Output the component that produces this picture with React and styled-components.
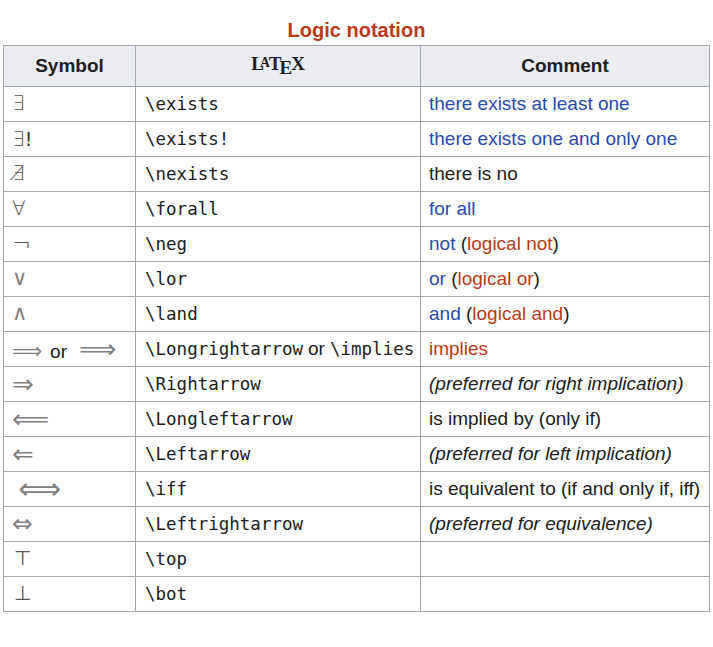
import React from "react";
import styled, { createGlobalStyle } from "styled-components";

const Global = createGlobalStyle`
  html, body { margin: 0; padding: 0; background: #fff; }
  body { font-family: "Liberation Sans", Arial, sans-serif; color: #202122; }
`;

const Page = styled.div`
  padding: 0 0 0 3px;
`;

const Table = styled.table`
  border-collapse: collapse;
  width: 707px;
  table-layout: fixed;
  font-size: 19px;
  color: #202122;
`;

const Caption = styled.caption`
  font-weight: bold;
  font-size: 20px;
  color: #ba3a1a;
  padding: 19px 0 4px;
  line-height: 22px;
`;

const Th = styled.th`
  background: #eaecf0;
  border: 1px solid #a2a9b1;
  height: 40px;
  padding: 0 8px;
  font-weight: bold;
  font-size: 19px;
  text-align: center;
  vertical-align: middle;
`;

const Row = styled.tr`
  height: 35px;
`;

const Td = styled.td`
  border: 1px solid #a2a9b1;
  padding: 0 8px;
  height: 34px;
  line-height: 22px;
  vertical-align: middle;
  white-space: nowrap;
  font-style: ${(p) => (p.$italic ? "italic" : "normal")};
`;

const SymCell = styled(Td)`
  padding-left: 8px;
`;

const Sym = styled.span`
  font-family: "DejaVu Sans", sans-serif;
  font-weight: ${(p) => (p.$regular ? 400 : 200)};
  font-size: ${(p) => p.$size || 20}px;
  line-height: 1;
  color: ${(p) => (p.$regular ? "#808080" : "#555")};
  margin-left: ${(p) => p.$indent || 0}px;
`;

const Bang = styled.span`
  font-family: "DejaVu Sans", sans-serif;
  font-size: 19px;
  color: #333;
`;

const Or = styled.span`
  font-family: "Liberation Sans", Arial, sans-serif;
  font-size: 19px;
  color: #202122;
  margin: 0 ${(p) => p.$pad || 4}px;
`;

const Code = styled.code`
  font-family: "DejaVu Sans Mono", monospace;
  font-size: 17.5px;
  color: #202122;
`;

const CodeCell = styled(Td)`
  padding-left: 9px;
`;

const Link = styled.span`
  color: ${(p) => (p.$red ? "#ba3a1a" : "#2a4aad")};
`;

const LatexLogo = styled.span`
  font-family: "Liberation Serif", "Times New Roman", serif;
  font-weight: bold;
  font-size: 19px;
`;

const LogoA = styled.span`
  font-size: 0.72em;
  vertical-align: 0.22em;
  margin-left: -0.28em;
  margin-right: -0.08em;
`;

const LogoE = styled.span`
  vertical-align: -0.25em;
  margin-left: -0.1em;
  margin-right: -0.06em;
`;

const rows = [
  { sym: <Sym>∃</Sym>, code: "\\exists", comment: <Link>there exists at least one</Link> },
  {
    sym: (
      <>
        <Sym>∃</Sym>
        <Bang>!</Bang>
      </>
    ),
    code: "\\exists!",
    comment: <Link>there exists one and only one</Link>,
  },
  { sym: <Sym>∄</Sym>, code: "\\nexists", comment: "there is no" },
  { sym: <Sym>∀</Sym>, code: "\\forall", comment: <Link>for all</Link> },
  {
    sym: <Sym $size={23}>¬</Sym>,
    code: "\\neg",
    comment: (
      <>
        <Link>not</Link> (<Link $red>logical not</Link>)
      </>
    ),
  },
  {
    sym: <Sym $regular $size={21}>∨</Sym>,
    code: "\\lor",
    comment: (
      <>
        <Link>or</Link> (<Link $red>logical or</Link>)
      </>
    ),
  },
  {
    sym: <Sym $regular $size={21}>∧</Sym>,
    code: "\\land",
    comment: (
      <>
        <Link>and</Link> (<Link $red>logical and</Link>)
      </>
    ),
  },
  {
    sym: (
      <>
        <Sym $regular $size={21}>⟹</Sym>
        <Or $pad={8}>or</Or>
        <Sym $regular $size={26} $indent={4}>⟹</Sym>
      </>
    ),
    code: (
      <>
        <Code>\Longrightarrow</Code>
        <Or $pad={5}>or</Or>
        <Code>\implies</Code>
      </>
    ),
    comment: <Link $red>implies</Link>,
  },
  { sym: <Sym $regular $size={26}>⇒</Sym>, code: "\\Rightarrow", comment: "(preferred for right implication)", italic: true },
  { sym: <Sym $regular $size={26}>⟸</Sym>, code: "\\Longleftarrow", comment: "is implied by (only if)" },
  { sym: <Sym $regular $size={26}>⇐</Sym>, code: "\\Leftarrow", comment: "(preferred for left implication)", italic: true },
  { sym: <Sym $regular $size={30} $indent={6}>⟺</Sym>, code: "\\iff", comment: "is equivalent to (if and only if, iff)" },
  { sym: <Sym $regular $size={25}>⇔</Sym>, code: "\\Leftrightarrow", comment: "(preferred for equivalence)", italic: true },
  { sym: <Sym $indent={2}>⊤</Sym>, code: "\\top", comment: "" },
  { sym: <Sym $indent={2}>⊥</Sym>, code: "\\bot", comment: "" },
];

export default function App() {
  return (
    <>
      <Global />
      <Page>
        <Table>
          <Caption>Logic notation</Caption>
          <colgroup>
            <col style={{ width: "132px" }} />
            <col style={{ width: "285px" }} />
            <col style={{ width: "289px" }} />
          </colgroup>
          <thead>
            <tr>
              <Th>Symbol</Th>
              <Th>
                <LatexLogo>
                  L<LogoA>A</LogoA>T<LogoE>E</LogoE>X
                </LatexLogo>
              </Th>
              <Th>Comment</Th>
            </tr>
          </thead>
          <tbody>
            {rows.map((r, i) => (
              <Row key={i}>
                <SymCell>{r.sym}</SymCell>
                <CodeCell>{typeof r.code === "string" ? <Code>{r.code}</Code> : r.code}</CodeCell>
                <Td $italic={r.italic}>{r.comment}</Td>
              </Row>
            ))}
          </tbody>
        </Table>
      </Page>
    </>
  );
}
